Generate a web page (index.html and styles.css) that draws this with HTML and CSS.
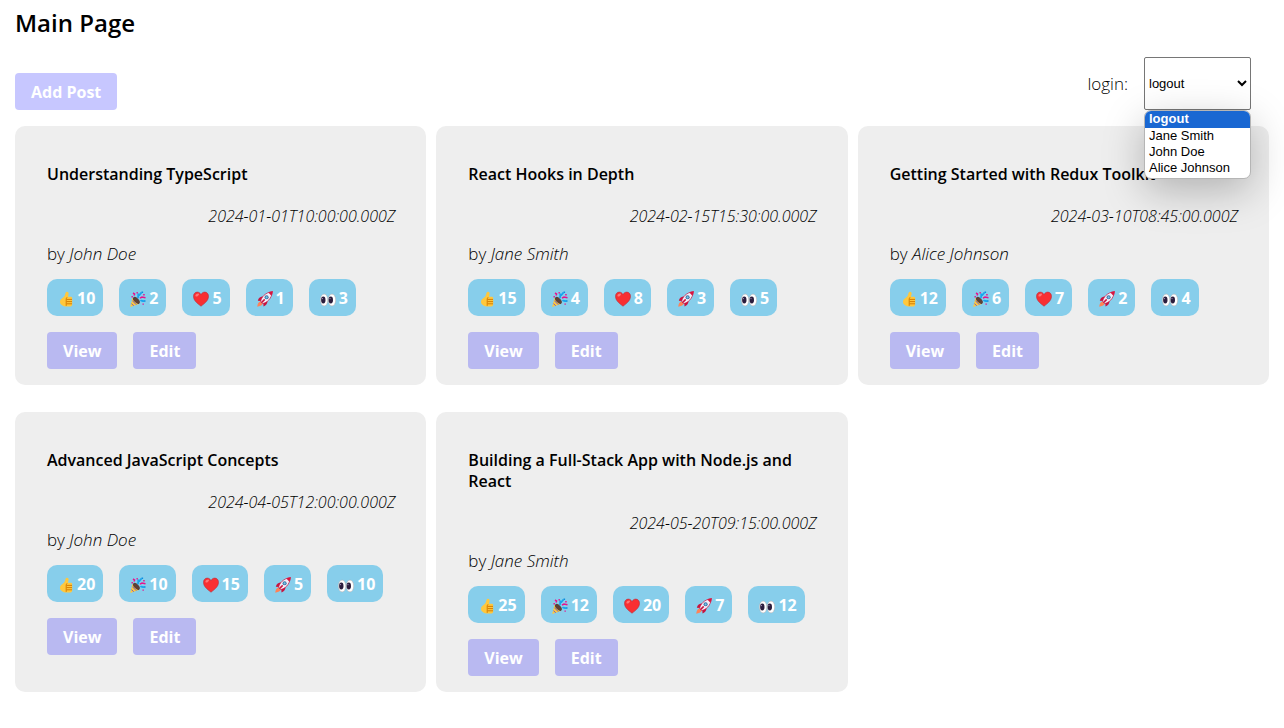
FILE: index.html
```html
<!DOCTYPE html>
<html lang="en">
<head>
<meta charset="utf-8">
<title>Main Page</title>
<link rel="stylesheet" href="styles.css">
</head>
<body>
<svg class="sprite" aria-hidden="true">
  <symbol id="thumb" viewBox="0 0 16 16">
    <path fill="#ffc83d" d="M8.700.7c1-.3 1.900.5 1.900 1.700 0 1.300-.5 2.500-.7 3.400h2.700c1 0 1.600.6 1.600 1.400v6.300c0 1.200-1 2.100-2.300 2.100H8.200c-1.500 0-2.600-.5-3.700-1.100-1.400-.7-2.500-1.600-2.500-3.400 0-1.900.8-3.100 2.200-3.900C6 6.200 6.700 5 7.100 3.600c.3-1.100.4-2.500 1.600-2.900z"/>
    <path fill="none" stroke="#d67d00" stroke-width="1" d="M9 6.300l-.8 1.500v7M8.500 8.400h5.500M8.500 10.600h5.500M8.500 12.800h5.500"/>
  </symbol>
  <symbol id="party" viewBox="0 0 16 16">
    <path fill="#ffc83d" d="M2.500 7l6.500 6L.2 15.900z"/>
    <path fill="none" stroke="#6a5fd0" stroke-width="1" d="M2.500 9.700l3.800 4M1.500 12.600l2.200 2.200"/>
    <ellipse cx="6.400" cy="9.300" rx="2.300" ry="4.300" transform="rotate(-43 6.400 9.300)" fill="#5d4038"/>
    <path fill="none" stroke="#e8128c" stroke-width="1.500" d="M3 2l1.600 1-.6 1.600M10 7.200l2-1.200 3.500.8"/>
    <path fill="none" stroke="#18a5ee" stroke-width="1.900" d="M7.500 7c1.500-1.500.3-3 1-4.500M10.500 10c1.200-1 2 .4 3.500 0M9 4.500l2.500-3"/>
    <path fill="#e8128c" d="M1.500 5h1.400v1.400H1.500zM13.200 3h1.500v1.500h-1.500zM6.500 1h1.300v1.400H6.500zM12.500 12.500h1.300v1.300h-1.300z"/>
    <path fill="#0b8de0" d="M11.500.6h1.600v1.500h-1.600zM14 9.200h1.500v1.500H14z"/>
  </symbol>
  <symbol id="heart" viewBox="0 0 16 16">
    <path fill="#f92f32" stroke="#b92b3d" stroke-width=".6" d="M8 15.200C4.200 12.300.5 9.500.5 5.300c0-2.600 1.700-4.200 3.700-4.200 1.700 0 3 .9 3.800 2.500.8-1.600 2.100-2.500 3.800-2.500 2 0 3.700 1.600 3.700 4.200 0 4.200-3.700 7-7.500 9.900z"/>
    <ellipse cx="4.200" cy="4" rx="2" ry="1.200" fill="#ff7676" transform="rotate(-35 4.200 4)"/>
  </symbol>
  <symbol id="rocket" viewBox="0 0 16 16">
    <path fill="#ff8257" d="M3.200 10.500l2.400 2.300c-.7 1.800-3 2.700-5.300 2.900.1-2.300 1-4.800 2.900-5.200z"/>
    <path fill="#c8133f" d="M6.500 5.600C3.500 5.500 1.600 7 .8 9.700l3.300.3 2.200 2.300.2 3.300c2.700-1 4.200-3.100 4-6z"/>
    <path fill="#f3eef8" stroke="#c8133f" stroke-width=".7" d="M3.600 10.500C4.500 6 8 1.700 15.500.5 14.500 8 10 11.600 5.600 12.600z"/>
    <path fill="#d9143f" d="M11.300 1.600C12.500 1 14 .6 15.700.3c-.2 1.700-.7 3.200-1.300 4.500z"/>
    <circle cx="9.600" cy="6.300" r="2" fill="#3f6fa0"/>
    <circle cx="9.600" cy="6.300" r="1.100" fill="#72c9ed"/>
    <path stroke="#c8133f" stroke-width="1.500" d="M4.500 11.600l3.200-3.200"/>
  </symbol>
  <symbol id="eyes" viewBox="0 0 16 16">
    <ellipse cx="4.100" cy="9" rx="3.700" ry="5.900" fill="#fff" stroke="#b6a9a9" stroke-width=".5"/>
    <ellipse cx="12" cy="9" rx="3.700" ry="5.900" fill="#fff" stroke="#b6a9a9" stroke-width=".5"/>
    <ellipse cx="3.300" cy="9" rx="2.200" ry="3.400" fill="#2b1d3d"/>
    <ellipse cx="10.800" cy="9" rx="2.200" ry="3.400" fill="#2b1d3d"/>
    <circle cx="2.500" cy="7.600" r=".6" fill="#a99abf"/>
    <circle cx="10" cy="7.600" r=".6" fill="#a99abf"/>
  </symbol>
</svg>
<main class="page">
  <h1 class="page-title">Main Page</h1>
  <header class="toolbar">
    <button class="btn btn-add" type="button">Add Post</button>
    <div class="login">
      <label for="user">login:</label>
      <div class="picker">
        <select id="user" class="user-select">
          <option>logout</option><option>Jane Smith</option><option>John Doe</option><option>Alice Johnson</option>
        </select>
        <ul class="menu" role="listbox" aria-label="login">
          <li class="menu-item selected" role="option" aria-selected="true">logout</li>
          <li class="menu-item" role="option">Jane Smith</li>
          <li class="menu-item" role="option">John Doe</li>
          <li class="menu-item" role="option">Alice Johnson</li>
        </ul>
      </div>
    </div>
  </header>
  <section class="posts" id="posts"></section>
</main>
<script src="posts.js"></script>
</body>
</html>
```

FILE: styles.css
```css
* { box-sizing: border-box; }
body {
  margin: 0;
  background: #fff;
  color: #000;
  font: 300 16px/21px "Open Sans", "Noto Sans", sans-serif;
}
.sprite { position: absolute; width: 0; height: 0; }
.page { padding: 7px 15px 16px; }
.page-title { margin: 0 0 18px; font-size: 24px; line-height: 32px; font-weight: 600; }
.toolbar { display: flex; justify-content: space-between; align-items: flex-end; margin-bottom: 16px; }
.btn {
  height: 37px;
  padding: 2px 16px 0;
  border: 0;
  border-radius: 4px;
  background: #b9b9f1;
  color: #fff;
  font: inherit;
  font-weight: 700;
}
.btn-add { background: #c7c7ff; }
.login { display: flex; align-items: center; gap: 16px; margin-right: 18px; font-size: 17px; }
.picker { position: relative; }
.user-select {
  display: block;
  width: 107px;
  height: 53px;
  border: 1px solid #767676;
  border-radius: 2px;
  background: #fff;
  color: #000;
  font: 13px "Liberation Sans", Arial, sans-serif;
}
.menu {
  position: absolute;
  top: 100%;
  left: 0;
  right: 0;
  margin: 0;
  padding: 0 0 2px;
  list-style: none;
  overflow: hidden;
  border: 1px solid #b5b5b5;
  border-radius: 7px;
  background: #fff;
  box-shadow: 0 12px 40px rgba(0, 0, 0, .25);
  font: 13px/16px "Liberation Sans", Arial, sans-serif;
}
.menu-item { padding: 0 4px; }
.menu-item.selected { padding-bottom: 1px; background: #1967d2; color: #fff; font-weight: 700; }
.posts { display: grid; grid-template-columns: repeat(3, minmax(0, 1fr)); gap: 27px 10px; }
.card { padding: 38px 31px 16px 32px; border-radius: 10px; background: #eee; }
.card-title { margin: 0 0 21px; font-size: 16px; line-height: 21px; font-weight: 600; }
.card-date { margin: 0 0 16px; text-align: right; font-style: italic; }
.card-author { margin: 0 0 15px; font-size: 17px; }
.row { display: flex; gap: 16px; }
.reactions { margin-bottom: 16px; }
.reaction {
  display: flex;
  align-items: center;
  gap: 3px;
  height: 37px;
  padding: 2px 8px 0 11px;
  border: 0;
  border-radius: 10px;
  background: #87ceeb;
  color: #fff;
  font: inherit;
  font-weight: 700;
}
.reaction svg { width: 16px; height: 16px; }
```

FILE: posts.js
```js
const posts = [
  ["Understanding TypeScript", "2024-01-01T10:00:00.000Z", "John Doe", [10, 2, 5, 1, 3]],
  ["React Hooks in Depth", "2024-02-15T15:30:00.000Z", "Jane Smith", [15, 4, 8, 3, 5]],
  ["Getting Started with Redux Toolkit", "2024-03-10T08:45:00.000Z", "Alice Johnson", [12, 6, 7, 2, 4]],
  ["Advanced JavaScript Concepts", "2024-04-05T12:00:00.000Z", "John Doe", [20, 10, 15, 5, 10]],
  ["Building a Full-Stack App with Node.js and React", "2024-05-20T09:15:00.000Z", "Jane Smith", [25, 12, 20, 7, 12]]
];
const icons = ["thumb", "party", "heart", "rocket", "eyes"];

document.getElementById("posts").innerHTML = posts.map(([title, date, author, counts]) => `
  <article class="card">
    <h2 class="card-title">${title}</h2>
    <p class="card-date"><time>${date}</time></p>
    <p class="card-author">by <em>${author}</em></p>
    <div class="row reactions">${counts.map((n, i) => `
      <button class="reaction" type="button" aria-label="${icons[i]} ${n}"><svg aria-hidden="true"><use href="#${icons[i]}"/></svg><span>${n}</span></button>`).join("")}
    </div>
    <div class="row">
      <button class="btn" type="button">View</button>
      <button class="btn" type="button">Edit</button>
    </div>
  </article>`).join("");
```
